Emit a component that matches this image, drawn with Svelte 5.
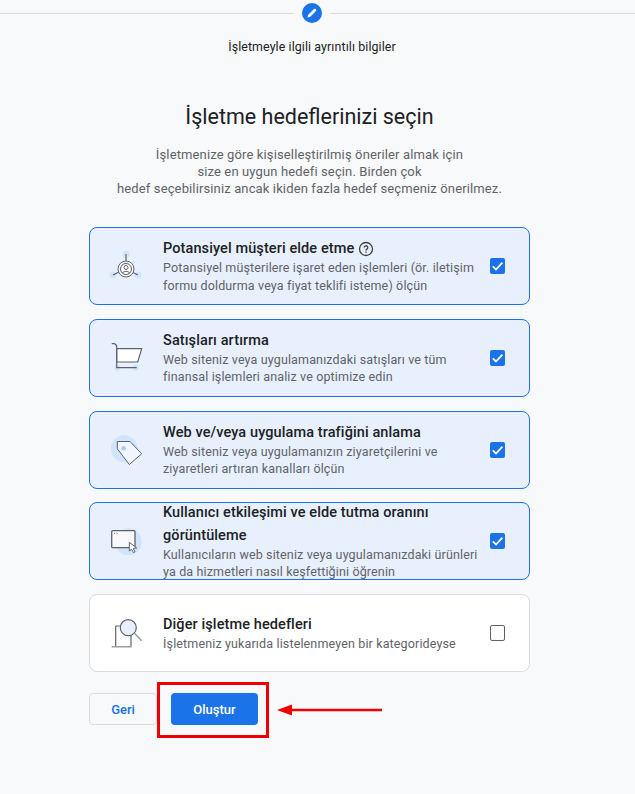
<script>
  const goals = [
    { id: 'lead', title: 'Potansiyel müşteri elde etme', help: true, desc: 'Potansiyel müşterilere işaret eden işlemleri (ör. iletişim formu doldurma veya fiyat teklifi isteme) ölçün', checked: true },
    { id: 'cart', title: 'Satışları artırma', desc: 'Web siteniz veya uygulamanızdaki satışları ve tüm finansal işlemleri analiz ve optimize edin', checked: true },
    { id: 'tag', title: 'Web ve/veya uygulama trafiğini anlama', desc: 'Web siteniz veya uygulamanızın ziyaretçilerini ve ziyaretleri artıran kanalları ölçün', checked: true },
    { id: 'window', title: 'Kullanıcı etkileşimi ve elde tutma oranını görüntüleme', desc: 'Kullanıcıların web siteniz veya uygulamanızdaki ürünleri ya da hizmetleri nasıl keşfettiğini öğrenin', checked: true },
    { id: 'search', title: 'Diğer işletme hedefleri', desc: 'İşletmeniz yukarıda listelenmeyen bir kategorideyse', checked: false }
  ];
</script>

<div class="page">
  <div class="stepper">
    <div class="line left"></div>
    <div class="step-icon">
      <svg width="12" height="12" viewBox="0 0 12 12"><path d="M1.5 10.5 L2 8 L8 2 Q8.8 1.3 9.6 2 L10 2.4 Q10.7 3.2 10 4 L4 10 Z" fill="#fff" /></svg>
    </div>
    <div class="line"></div>
  </div>
  <div class="step-label">İşletmeyle ilgili ayrıntılı bilgiler</div>

  <div class="content">
    <h1>İşletme hedeflerinizi seçin</h1>
    <p class="intro">
      İşletmenize göre kişiselleştirilmiş öneriler almak için<br />
      size en uygun hedefi seçin. Birden çok<br />
      hedef seçebilirsiniz ancak ikiden fazla hedef seçmeniz önerilmez.
    </p>

    <div class="cards">
      {#each goals as goal}
        <div class="card" class:selected={goal.checked}>
          <div class="icon">
            <svg width="48" height="48" viewBox="0 0 48 48" fill="none" stroke="#5f6368" stroke-width="1">
              {#if goal.id === 'lead'}
                <circle cx="24" cy="12" r="3.5" fill="#d2e3fc" stroke="none" />
                <circle cx="11" cy="33" r="3.5" fill="#d2e3fc" stroke="none" />
                <circle cx="36" cy="33" r="3.5" fill="#d2e3fc" stroke="none" />
                <path d="M24 12 V19 M11 33 L17 30 M36 33 L30 30" stroke-width="1.2" />
                <circle cx="24" cy="27" r="8" fill="#f8f9fa" />
                <circle cx="24" cy="27" r="5.5" fill="#fff" />
                <circle cx="24" cy="25.5" r="2" />
                <path d="M20.2 31 Q24 27.5 27.8 31" />
              {:else if goal.id === 'cart'}
                <circle cx="15.3" cy="33.7" r="3.2" fill="#d2e3fc" stroke="none" />
                <circle cx="33.7" cy="33.7" r="3.2" fill="#d2e3fc" stroke="none" />
                <path d="M14.7 14.7 H39.7 L35.7 28 H14.7 Z" fill="#fff" stroke-width="1.2" />
                <path d="M9.7 9.7 H12 Q14.7 10 14.7 13 V33.7 H34.7" stroke-width="1.2" />
              {:else if goal.id === 'tag'}
                <circle cx="22.3" cy="22.8" r="13.5" fill="#d2e3fc" stroke="none" />
                <path d="M15.3 15.5 H28 L39.7 27.8 L27.3 38.5 L15.3 22.8 Z" fill="#f1f5fe" stroke-linejoin="round" />
                <circle cx="21.7" cy="22.2" r="2.2" fill="#a8c7fa" stroke="none" />
              {:else if goal.id === 'window'}
                <circle cx="26.3" cy="24.7" r="13.5" fill="#d2e3fc" stroke="none" />
                <rect x="9.7" y="13.7" width="23.3" height="17" rx="1" fill="#f8f9fa" stroke-width="1.3" />
                <path d="M12 16.3 H13 M14.5 16.3 H15.5" />
                <path d="M27.3 25.3 V34 L29.5 32.3 L31.5 35.6 L33 34.7 L31.2 31.4 L34.7 31 Z" fill="#fff" />
              {:else}
                <path d="M13.7 17 V37 M13.7 17 H19 M29 26 V37" stroke-width="1.2" />
                <path d="M9.7 37.7 H29.7" stroke-width="1.6" stroke="#9aa0a6" />
                <circle cx="26.3" cy="18.7" r="8" fill="#e8f0fe" stroke-width="1.2" />
                <path d="M32.5 24.3 L39.7 31.7" stroke="#9aa0a6" stroke-width="1.6" />
              {/if}
            </svg>
          </div>
          <div class="body">
            <div class="title">
              {goal.title}
              {#if goal.help}
                <svg class="help" width="16" height="16" viewBox="0 0 16 16" fill="none" stroke="#3c4043" stroke-width="1.3">
                  <circle cx="8" cy="8" r="6.5" />
                  <path d="M6.2 6.6 A1.8 1.8 0 1 1 8.9 8.1 Q8 8.6 8 9.5" />
                  <path d="M8 10.6 V11.8" />
                </svg>
              {/if}
            </div>
            <div class="desc">{goal.desc}</div>
          </div>
          <div class="check" class:on={goal.checked}>
            {#if goal.checked}
              <svg width="15" height="16" viewBox="0 0 15 16" fill="none" stroke="#fff" stroke-width="1.8"><path d="M2.8 8.3 L6 11.5 L12.4 4.7" /></svg>
            {/if}
          </div>
        </div>
      {/each}
    </div>

    <div class="actions">
      <button class="back">Geri</button>
      <button class="create">Oluştur</button>
      <div class="highlight"></div>
      <svg class="arrow" width="108" height="14" viewBox="0 0 108 14">
        <path d="M0 7 L15 1.5 V5.8 H105 V8.2 H15 V12.5 Z" fill="#ee0000" />
      </svg>
    </div>
  </div>
</div>

<style>
  :global(body) {
    background: #f8f9fa;
  }

  .page {
    height: 794px;
    overflow: hidden;
    font-family: Roboto, "Liberation Sans", sans-serif;
    background: #f8f9fa;
    color: #202124;
  }

  .stepper {
    display: flex;
    align-items: center;
    gap: 8px;
    height: 20px;
    margin-top: 3px;
  }

  .line {
    flex: 1;
    height: 1px;
    background: #dadce0;
  }

  .line.left {
    flex: none;
    width: 294px;
  }

  .step-icon {
    width: 20px;
    height: 20px;
    border-radius: 50%;
    background: #1a73e8;
    display: flex;
    align-items: center;
    justify-content: center;
  }

  .step-label {
    margin-top: 17px;
    padding-right: 11px;
    text-align: center;
    font-size: 12.4px;
    line-height: 14px;
    letter-spacing: 0.1px;
  }

  .content {
    padding: 0 105px 0 89px;
  }

  h1 {
    margin: 48px 0 0;
    text-align: center;
    font-size: 21.5px;
    font-weight: 400;
    line-height: 30px;
  }

  .intro {
    margin: 14px 0 0;
    text-align: center;
    font-size: 13px;
    line-height: 17px;
    color: #5f6368;
    letter-spacing: 0.13px;
  }

  .cards {
    margin-top: 30px;
    display: flex;
    flex-direction: column;
    gap: 13.75px;
  }

  .card {
    box-sizing: border-box;
    height: 78px;
    display: flex;
    align-items: center;
    border: 1px solid #dadce0;
    border-radius: 8px;
    background: #fff;
    overflow: hidden;
  }

  .card.selected {
    border-color: #1a73e8;
    background: #e8f0fe;
  }

  .icon {
    width: 48px;
    height: 48px;
    margin-left: 12px;
    flex: none;
  }

  .body {
    flex: 1;
    margin-left: 13px;
    padding-bottom: 1px;
    min-width: 0;
  }

  .title {
    font-size: 14.5px;
    font-weight: 500;
    line-height: 23px;
    color: #202124;
    letter-spacing: 0.1px;
    display: flex;
    align-items: center;
    gap: 4px;
  }

  .help {
    flex: none;
  }

  .desc {
    margin-top: -1px;
    font-size: 12.5px;
    line-height: 17.5px;
    color: #5f6368;
    letter-spacing: 0.14px;
  }

  .check {
    box-sizing: border-box;
    flex: none;
    width: 15px;
    height: 16px;
    margin: 0 24px 0 12px;
    border: 1.5px solid #5f6368;
    border-radius: 2px;
  }

  .check.on {
    border: none;
    background: #1a73e8;
  }

  .actions {
    position: relative;
    margin-top: 21px;
    display: flex;
    gap: 14px;
  }

  button {
    box-sizing: border-box;
    height: 32px;
    border-radius: 4px;
    font-family: inherit;
    font-size: 13px;
    font-weight: 500;
  }

  .back {
    width: 68px;
    border: 1px solid #dadce0;
    background: #f8f9fa;
    color: #1a73e8;
  }

  .create {
    width: 87px;
    border: none;
    background: #1a73e8;
    color: #fff;
  }

  .highlight {
    position: absolute;
    left: 68px;
    top: -11px;
    width: 112px;
    height: 56px;
    box-sizing: border-box;
    border: 3px solid #ee0000;
  }

  .arrow {
    position: absolute;
    left: 188px;
    top: 10px;
  }
</style>
